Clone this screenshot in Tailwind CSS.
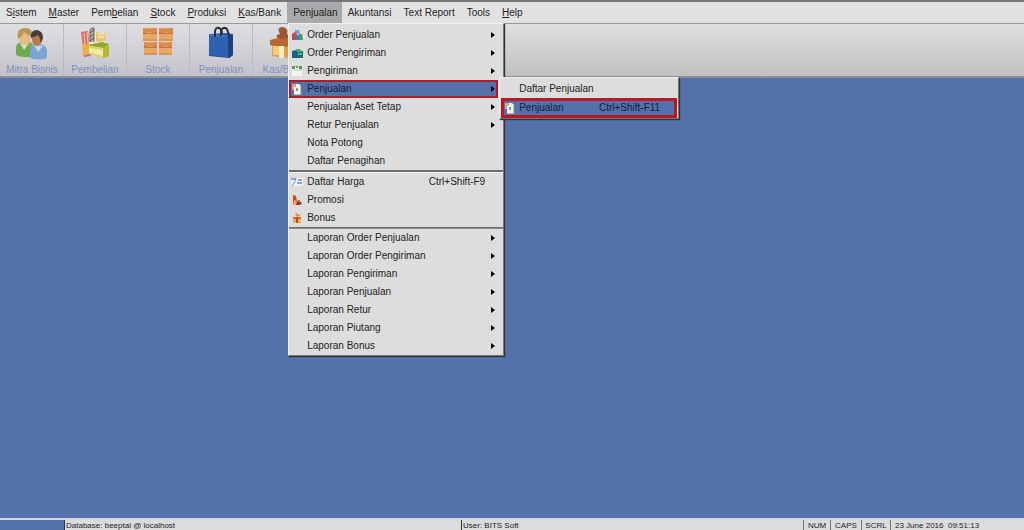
<!DOCTYPE html>
<html lang="id">
  <head>
    <meta charset="UTF-8" />
    <meta name="viewport" content="width=device-width, initial-scale=1.0" />
    <title>Penjualan</title>
    <script src="https://cdn.jsdelivr.net/npm/@tailwindcss/browser@4"></script>
  </head>
  <body class="flex h-screen flex-col overflow-hidden bg-[#5472aa] font-['Liberation_Sans',Arial,sans-serif] text-[10px] leading-3 text-[#222]">

    <!-- menu bar -->
    <nav class="flex h-6 shrink-0 border-t-2 border-b border-t-[#77747a] border-b-[#999] bg-[#e2e2e2]">
      <button class="px-[6px]">S<u>i</u>stem</button>
      <button class="px-[6px]"><u>M</u>aster</button>
      <button class="px-[6px]">Pem<u>b</u>elian</button>
      <button class="px-[6px]"><u>S</u>tock</button>
      <button class="px-[6px]"><u>P</u>roduksi</button>
      <button class="px-[6px]"><u>K</u>as/Bank</button>
      <div class="relative flex">
        <button class="bg-[#a9a9ab] pr-1 pl-[6px]">Penjualan</button>

        <!-- open menu -->
        <div class="absolute top-full left-px z-10 flex w-[216px] flex-col border border-[#f2f2f2] border-r-[#777] border-b-[#777] bg-[#dddddd] pt-[2px] shadow-[1px_1px_1px_#333] *:shrink-0">
          <button class="flex h-[18px] items-center gap-1 px-[2px] text-left">
            <svg class="h-3 w-3" viewBox="0 0 12 12"><path d="M4 1h4l1 4H4z" fill="#7c9ed8"/><path d="M1 5l3-2 3 4-1 4H1z" fill="#cf4140"/><path d="M4 6h4v5H4z" fill="#4778bd"/><path d="M8 5h3l1 6H8z" fill="#3c9d55"/></svg>
            <span class="grow">Order Penjualan</span>
            <svg class="mr-[6px] h-[6px] w-1" viewBox="0 0 4 6"><path d="M0 0l4 3-4 3z"/></svg>
          </button>
          <button class="flex h-[18px] items-center gap-1 px-[2px] text-left">
            <svg class="h-3 w-3" viewBox="0 0 12 12"><path d="M1 4l4-1 7 1v7H1z" fill="#197466"/><path d="M1 4h5v7H1z" fill="#1e5b93"/><path d="M5 2h4l2 3H6z" fill="#4bad71"/><path d="M7 6h4v2H7z" fill="#47b994"/></svg>
            <span class="grow">Order Pengiriman</span>
            <svg class="mr-[6px] h-[6px] w-1" viewBox="0 0 4 6"><path d="M0 0l4 3-4 3z"/></svg>
          </button>
          <button class="flex h-[18px] items-center gap-1 px-[2px] text-left">
            <svg class="h-3 w-3" viewBox="0 0 12 12"><path d="M1 2h10v9H1z" fill="#f2f5ee"/><path d="M1 1h3v3H1zM5 1h2v2H5zM8 1h3v3H8z" fill="#519a4d"/><path d="M2 5h9" stroke="#b4cfb0"/></svg>
            <span class="grow">Pengiriman</span>
            <svg class="mr-[6px] h-[6px] w-1" viewBox="0 0 4 6"><path d="M0 0l4 3-4 3z"/></svg>
          </button>
          <div class="relative">
            <button class="flex h-[18px] w-[209px] items-center gap-1 border-2 border-[#bd1625] bg-[#5472aa] pr-px text-left">
              <svg class="h-3 w-3" viewBox="0 0 12 12"><path d="M3 1h5l2 2v9H3z" fill="#f1f1ed"/><path d="M1 1h4v3H3v3H1z" fill="#d6a797"/><path d="M5 5h2v3H5z" fill="#80a46e"/><path d="M10 3v9H3" fill="none" stroke="#888"/></svg>
              <span class="grow text-[#151b34]">Penjualan</span>
              <svg class="h-[6px] w-1" viewBox="0 0 4 6"><path d="M0 0l4 3-4 3z"/></svg>
            </button>

            <!-- submenu -->
            <div class="absolute -top-[3px] left-[210px] flex w-[180px] flex-col border border-[#f2f2f2] border-r-[#777] border-b-[#777] bg-[#dddddd] px-px pt-[2px] shadow-[1px_1px_1px_#333]">
              <button class="flex h-[18px] items-center pl-[18px] text-left">Daftar Penjualan</button>
              <button class="flex h-5 items-center gap-[3px] border-3 border-[#bd1625] bg-[#5472aa] pr-[14px] text-left text-[#151b34]">
                <svg class="h-3 w-3" viewBox="0 0 12 12"><path d="M3 1h5l2 2v9H3z" fill="#f1f1ed"/><path d="M1 1h4v3H3v3H1z" fill="#d6a797"/><path d="M5 5h2v3H5z" fill="#80a46e"/><path d="M10 3v9H3" fill="none" stroke="#888"/></svg>
                <span class="grow">Penjualan</span>
                <span>Ctrl+Shift-F11</span>
              </button>
            </div>
          </div>
          <button class="flex h-[18px] items-center pr-[2px] pl-[18px] text-left">
            <span class="grow">Penjualan Aset Tetap</span>
            <svg class="mr-[6px] h-[6px] w-1" viewBox="0 0 4 6"><path d="M0 0l4 3-4 3z"/></svg>
          </button>
          <button class="flex h-[18px] items-center pr-[2px] pl-[18px] text-left">
            <span class="grow">Retur Penjualan</span>
            <svg class="mr-[6px] h-[6px] w-1" viewBox="0 0 4 6"><path d="M0 0l4 3-4 3z"/></svg>
          </button>
          <button class="flex h-[18px] items-center pl-[18px] text-left">Nota Potong</button>
          <button class="flex h-[18px] items-center pl-[18px] text-left">Daftar Penagihan</button>
          <div class="h-[3px] border-t-2 border-b border-t-[#6d6d6d] border-b-[#f4f4f4]"></div>
          <button class="flex h-[18px] items-center gap-1 pr-[18px] pl-[2px] text-left">
            <svg class="h-3 w-3" viewBox="0 0 12 12"><path d="M0 2h12v8H0z" fill="#edf0f5"/><path d="M0 3h5M7 4h4M6 7h5" stroke="#35598f"/><path d="M5 3L3 7l-2 3" fill="none" stroke="#7797bd"/></svg>
            <span class="grow">Daftar Harga</span>
            <span>Ctrl+Shift-F9</span>
          </button>
          <button class="flex h-[18px] items-center gap-1 px-[2px] text-left">
            <svg class="h-3 w-3" viewBox="0 0 12 12"><path d="M2 1l3 1 1 5-2 4-2-1z" fill="#c84b25"/><path d="M3 6l3 1-1 4H2z" fill="#f0a258"/><path d="M6 7l4 1 1 2-3 1H5z" fill="#a92e1f"/><path d="M7 6h2v2H7z" fill="#6c8d3d"/></svg>
            <span>Promosi</span>
          </button>
          <button class="flex h-[18px] items-center gap-1 px-[2px] text-left">
            <svg class="h-3 w-3" viewBox="0 0 12 12"><path d="M2 5h8v6H2z" fill="#e9b45d"/><path d="M2 5h8v2H2z" fill="#c66f27"/><path d="M5 5h2v6H5z" fill="#b94c22"/><path d="M6 5L4 2l2-1 1 2 2-1v2z" fill="#d69043"/></svg>
            <span>Bonus</span>
          </button>
          <div class="h-[2px] border-t border-b border-t-[#6d6d6d] border-b-[#8f8f8f]"></div>
          <button class="flex h-[18px] items-center pr-[2px] pl-[18px] text-left">
            <span class="grow">Laporan Order Penjualan</span>
            <svg class="mr-[6px] h-[6px] w-1" viewBox="0 0 4 6"><path d="M0 0l4 3-4 3z"/></svg>
          </button>
          <button class="flex h-[18px] items-center pr-[2px] pl-[18px] text-left">
            <span class="grow">Laporan Order Pengiriman</span>
            <svg class="mr-[6px] h-[6px] w-1" viewBox="0 0 4 6"><path d="M0 0l4 3-4 3z"/></svg>
          </button>
          <button class="flex h-[18px] items-center pr-[2px] pl-[18px] text-left">
            <span class="grow">Laporan Pengiriman</span>
            <svg class="mr-[6px] h-[6px] w-1" viewBox="0 0 4 6"><path d="M0 0l4 3-4 3z"/></svg>
          </button>
          <button class="flex h-[18px] items-center pr-[2px] pl-[18px] text-left">
            <span class="grow">Laporan Penjualan</span>
            <svg class="mr-[6px] h-[6px] w-1" viewBox="0 0 4 6"><path d="M0 0l4 3-4 3z"/></svg>
          </button>
          <button class="flex h-[18px] items-center pr-[2px] pl-[18px] text-left">
            <span class="grow">Laporan Retur</span>
            <svg class="mr-[6px] h-[6px] w-1" viewBox="0 0 4 6"><path d="M0 0l4 3-4 3z"/></svg>
          </button>
          <button class="flex h-[18px] items-center pr-[2px] pl-[18px] text-left">
            <span class="grow">Laporan Piutang</span>
            <svg class="mr-[6px] h-[6px] w-1" viewBox="0 0 4 6"><path d="M0 0l4 3-4 3z"/></svg>
          </button>
          <button class="flex h-[18px] items-center pr-[2px] pl-[18px] text-left">
            <span class="grow">Laporan Bonus</span>
            <svg class="mr-[6px] h-[6px] w-1" viewBox="0 0 4 6"><path d="M0 0l4 3-4 3z"/></svg>
          </button>
        </div>
      </div>
      <button class="px-[6px]">Akuntansi</button>
      <button class="px-[6px]">Text Report</button>
      <button class="px-[6px]">Tools</button>
      <button class="px-[6px]"><u>H</u>elp</button>
    </nav>

    <!-- toolbar -->
    <div class="flex h-[54px] shrink-0 border-b-2 border-[#8c8f96] bg-linear-to-b from-[#e0e0e0] to-[#c0c0c0] pl-px text-[#7f8fbd]">
      <button class="flex w-[63px] flex-col items-center gap-[2px] border-r border-[#b9bac2] bg-linear-to-b from-[#dedee2] to-[#c3c4cb] pt-[2px]">
        <svg class="h-9 w-8" viewBox="0 0 32 36">
          <path d="M0 29V21q1-5 7-5h6q5 1 5 6v8q-9 3-18-1z" fill="#70aa50"/>
          <path d="M4 17l4 7 5-7z" fill="#d7e5bd"/>
          <ellipse cx="9" cy="11" rx="6" ry="8" fill="#e5bb83"/>
          <path d="M2 13Q0 2 9 2q8 0 7 8-5-1-8-4-2 5-6 7z" fill="#b99851"/>
          <path d="M14 32v-8q1-6 8-6 9 0 9 8v6q-9 3-17 0z" fill="#78a5d5"/>
          <path d="M18 19l4 7 5-6z" fill="#c3d9f1"/>
          <ellipse cx="21" cy="13" rx="5" ry="7" fill="#b47b51"/>
          <path d="M15 12q-1-8 6-8 6 1 6 8l-2 5q-1-6-3-8-4 2-7 3z" fill="#4b3c37"/>
        </svg>
        <span>Mitra Bisnis</span>
      </button>
      <button class="flex w-[63px] flex-col items-center gap-[2px] border-r border-[#b9bac2] bg-linear-to-b from-[#dedee2] to-[#c3c4cb] pt-[2px]">
        <svg class="h-9 w-8" viewBox="0 0 32 36">
          <path d="M2 6l7-1 3 25-7 1z" fill="#d66e68"/>
          <path d="M5 7l2 22M8 6l2 22" stroke="#f5c7b8"/>
          <path d="M10 5l16 1 2 22H10z" fill="#f4ead0"/>
          <path d="M17 6l9 1 1 8-10 1z" fill="#e7c374"/>
          <path d="M19 8h6M19 11h6" stroke="#fff5d0"/>
          <path d="M11 16V5q1-4 4-3v14" fill="#b9b5b0" stroke="#665a54"/>
          <path d="M11 7l4-3M11 11l4-3M11 15l4-3" stroke="#514742"/>
          <path d="M8 19l15-2 7 2v11l-6 2-16-5z" fill="#dbd65b"/>
          <path d="M8 19l15-3 7 2-5 4z" fill="#8da632"/>
          <path d="M9 22l15 2v6L9 26z" fill="#f2ebb0"/>
          <path d="M24 23l6-4v11l-6 2z" fill="#b6b334"/>
          <path d="M3 17l7 2v9l-6 2z" fill="#edae4b"/>
        </svg>
        <span>Pembelian</span>
      </button>
      <button class="flex w-[63px] flex-col items-center gap-[2px] border-r border-[#b9bac2] bg-linear-to-b from-[#dedee2] to-[#c3c4cb] pt-[2px]">
        <svg class="h-9 w-8" viewBox="0 0 32 36">
          <path d="M1 2h14v13H1zM17 2h14v13H17zM2 16h13v13H2zM17 16h13v13H17z" fill="#e8a765"/>
          <path d="M1 2h14v4H1zM17 2h14v4H17zM2 16h13v4H2zM17 16h13v4H17z" fill="#d98b49"/>
          <path d="M1 6l6 1 8-1v2H1zM17 6l8 1 6-1v2H17zM2 20l6 1 7-1v2H2zM17 20l7 1 6-1v2H17z" fill="#c9753a"/>
          <path d="M1 14h14M17 14h14M2 28h13M17 28h13" stroke="#cc8344"/>
          <path d="M4 2h7M20 2h7M4 16h7M20 16h7" stroke="#f3c48f"/>
        </svg>
        <span>Stock</span>
      </button>
      <button class="flex w-[63px] flex-col items-center gap-[2px] border-r border-[#b9bac2] bg-linear-to-b from-[#dedee2] to-[#c3c4cb] pt-[2px]">
        <svg class="h-9 w-8" viewBox="0 0 32 36">
          <path d="M4 8l20-1 4 2v20l-4 3-20-2z" fill="#1f4f9c"/>
          <path d="M4 8l19 1v22L4 29z" fill="#2c62b0"/>
          <path d="M23 9l5-1v21l-4 3z" fill="#1c3f7e"/>
          <path d="M5 9l17 1" stroke="#5684c4"/>
          <path d="M10 11V5q1-4 4-3 3 1 3 6M16 10V5q2-5 6-2l2 6" fill="none" stroke="#27303e" stroke-width="2"/>
        </svg>
        <span>Penjualan</span>
      </button>
      <button class="flex w-[63px] flex-col items-center gap-[2px] border-r border-[#b9bac2] bg-linear-to-b from-[#dedee2] to-[#c3c4cb] pt-[2px]">
        <svg class="h-9 w-8" viewBox="0 0 32 36">
          <path d="M4 19h24v11l-12 2-12-2z" fill="#dba046"/>
          <path d="M5 20h6v9H5z" fill="#f0cb7c"/>
          <path d="M2 14l12-3 15 3v5l-13 2-14-2z" fill="#b9682f"/>
          <path d="M11 20h5v12h-5z" fill="#f6ecc4"/>
          <path d="M14 13q-7-1-5-4l3-1q-4-6 2-7 7 1 5 7 7 4-5 5z" fill="#9c5535"/>
        </svg>
        <span>Kas/Bank</span>
      </button>
    </div>

    <main class="grow bg-[#5472aa]"></main>

    <!-- status bar -->
    <footer class="flex h-3 shrink-0 border-t-2 border-[#d2d8e4] bg-[#dcdcdc] text-[8px] leading-[11px] whitespace-nowrap">
      <div class="w-16 bg-[#5472aa]"></div>
      <div class="w-[397px] border-l border-[#333] pl-px">Database: beeptal @ localhost</div>
      <div class="grow border-l border-[#333] pl-px">User: BITS Soft</div>
      <div class="w-[27px] border-l border-[#777] text-center">NUM</div>
      <div class="w-[31px] border-l border-[#777] text-center">CAPS</div>
      <div class="w-[29px] border-l border-[#777] text-center">SCRL</div>
      <div class="w-[134px] border-l border-[#777] pl-1">23 June 2016&nbsp; 09:51:13</div>
    </footer>
  </body>
</html>
